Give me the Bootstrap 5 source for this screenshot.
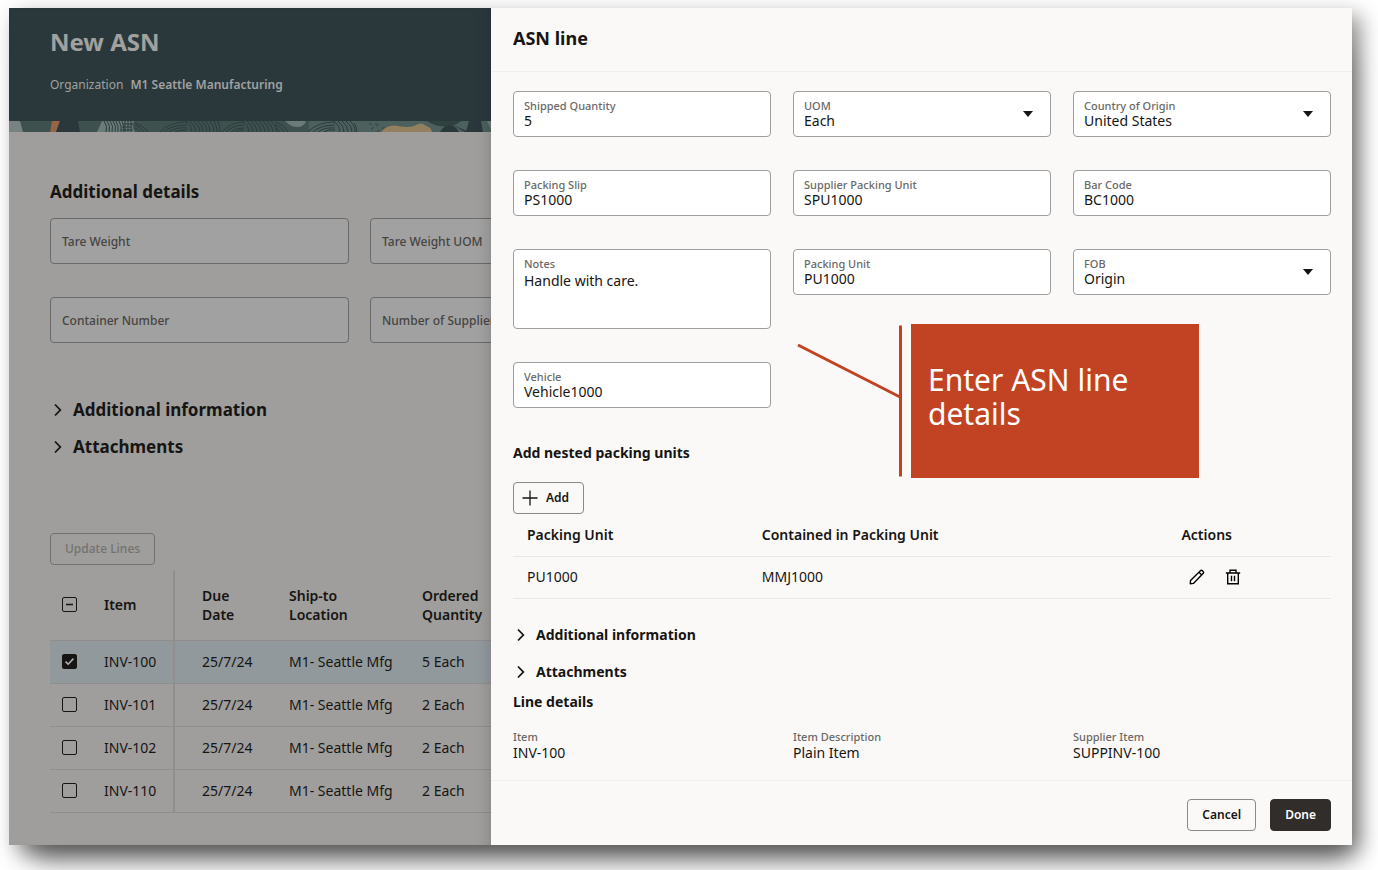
<!DOCTYPE html>
<html lang="en">
<head>
<meta charset="utf-8">
<meta name="viewport" content="width=device-width, initial-scale=1">
<title>New ASN</title>
<link rel="stylesheet" href="https://cdn.jsdelivr.net/npm/bootstrap@5.3.0/dist/css/bootstrap.min.css">
<style>
  body { font-family: "Noto Sans", "Open Sans", sans-serif; font-size: 14px; line-height: 20px; color: #161513; background: #fff; }
  .stage { padding: 8px 26px 25px 9px; }
  .frame { display: grid; grid-template-columns: 482fr 861fr; min-height: calc(100vh - 33px);
    box-shadow: 8px 8px 20px rgba(0,0,0,.46), 10px 30px 24px -14px rgba(0,0,0,.42); }
  h1, h2, h3, dl, dd { margin: 0; }

  /* dimmed page behind the drawer */
  .backpage { background: #9f9e9c; overflow: hidden; min-width: 0; }
  .backpage::after { content: ""; position: absolute; inset: 0; pointer-events: none; box-shadow: inset -12px 0 16px -12px rgba(0,0,0,.2); }
  .page-head { background: #2a383c; color: #a1a1a0; padding: 18px 41px 28px; }
  .page-head h1 { font-size: 24px; line-height: 32px; font-weight: 700; }
  .page-head p { font-size: 12px; line-height: 16px; margin: 19px 0 0; }
  .art { height: 11px; width: 482px; }
  .page-body { padding: 48px 0 32px 41px; }
  .page-body h2, .page-body .disclose { font-size: 17px; line-height: 24px; font-weight: 700; }
  .back-grid { display: grid; grid-template-columns: 299px 299px; gap: 33px 21px; margin: 14px 0 55px; }
  .back-field { height: 46px; border: 1px solid #6c6a68; border-radius: 4px; background: #a1a1a1; padding: 2px 11px 0; }
  .back-field label { font-size: 12px; line-height: 16px; font-weight: 500; color: #464442; white-space: nowrap; }
  .back-field input { flex: 1; min-width: 0; border: 0; background: transparent; outline: 0; }
  .disclose { border: 0; background: none; padding: 0; color: #161513; font-weight: 700; text-align: left; }
  .disclose svg { margin-left: 3px; }
  .back-more { gap: 13px; margin-bottom: 74px; }

  .btn-plain { height: 32px; font-size: 12px; line-height: 16px; font-weight: 600; border: 1px solid #8b8987; border-radius: 4px; padding: 0 14px; color: #161513; background: transparent; }
  .btn-plain:disabled { color: #74726f; border-color: #73716f; font-weight: 500; opacity: 1; }
  .btn-dark-solid { background: #312d2a; border-color: #312d2a; color: #fff; }

  .lines { width: 600px; table-layout: fixed; border-collapse: collapse; margin-top: 5px; }
  .lines th { height: 70px; font-weight: 600; line-height: 19px; vertical-align: middle; padding: 0; }
  .lines td { height: 43px; padding: 0; vertical-align: middle; }
  .lines tbody tr { border-top: 1px solid #8f8e8c; border-bottom: 1px solid #8f8e8c; }
  .lines .edge { border-right: 2px solid #918f8d; }
  .lines .gap-l { padding-left: 27px; }
  .lines .picked { background: #92999c; }
  .lines .w-check { width: 54px; }
  .lines .w-item { width: 70px; }
  .lines .w-date { width: 115px; }
  .lines .w-ship { width: 133px; }
  .lines .form-check-input { display: block; width: 15px; height: 15px; margin: 0 0 0 12px; border: 1px solid #161513; border-radius: 2px; background-color: transparent; background-size: 15px; }
  .lines .form-check-input:checked { background-color: #161513; background-image: url("data:image/svg+xml,%3csvg xmlns='http://www.w3.org/2000/svg' viewBox='0 0 15 15'%3e%3cpath fill='none' stroke='%23a9afb1' stroke-width='1.6' d='M3.5 7.6 6.2 10.2 11.4 4.6'/%3e%3c/svg%3e"); }
  .lines .form-check-input:indeterminate { background-color: transparent; border-color: #161513; background-image: url("data:image/svg+xml,%3csvg xmlns='http://www.w3.org/2000/svg' viewBox='0 0 15 15'%3e%3cpath stroke='%23161513' stroke-width='1.6' d='M4 7.5h7'/%3e%3c/svg%3e"); }

  /* drawer */
  .drawer { background: #fbf9f8; min-width: 0; }
  .drawer-head { padding: 18px 22px 21px; border-bottom: 1px solid #f1efed; }
  .drawer-head h2 { font-size: 18px; line-height: 24px; font-weight: 700; }
  .drawer-body { padding: 19px 21px 16px 22px; }
  .drawer-body h3 { font-size: 14px; line-height: 20px; font-weight: 700; }
  .fields { display: grid; grid-template-columns: repeat(3, 1fr); gap: 33px 22px; }
  .field { display: flex; flex-direction: column; height: 46px; border: 1px solid #a09e9c; border-radius: 4px; background: #fff; padding: 7px 10px 0; }
  .field.tall { height: 80px; }
  .field label, .details dt { font-size: 11px; line-height: 14px; font-weight: 500; color: #6b6966; }
  .field label { line-height: 13px; }
  .field input, .field select, .field textarea { appearance: none; border: 0; outline: 0; padding: 0; margin: 0; width: 100%; background: transparent; color: #161513; font-size: 14px; line-height: 18px; height: 18px; }
  .field textarea { height: 48px; line-height: 22px; resize: none; }
  .field.pick { background: #fff url("data:image/svg+xml,%3csvg xmlns='http://www.w3.org/2000/svg' viewBox='0 0 10 6'%3e%3cpath fill='%23161513' d='M0 0h10L5 6z'/%3e%3c/svg%3e") right 17px center / 10px 6px no-repeat; }
  .nested-title { margin-top: 35px; }
  .add-btn { margin-top: 19px; padding: 0 14px 0 8px; gap: 8px; }
  .units { width: 100%; table-layout: fixed; border-collapse: collapse; }
  .units th { font-weight: 600; }
  .units th, .units td { height: 42px; padding: 0 14px; border-bottom: 1px solid #ebe9e7; vertical-align: middle; }
  .units .c1 { width: 28.7%; }
  .units .c3 { width: 20%; }
  .units .acts { padding-left: 12px; padding-right: 0; }
  .icon-btn { width: 36px; height: 32px; border: 0; background: none; padding: 0; }
  .icon-btn svg { display: block; margin: auto; }
  .drawer .disclose { font-size: 14px; line-height: 20px; }
  .more { margin-top: 26px; margin-bottom: 10px; gap: 17px; }
  .details { margin-top: 18px; display: grid; grid-template-columns: repeat(3, 1fr); gap: 22px; }
  .details dd { line-height: 18px; }
  .drawer-foot { border-top: 1px solid #f1efed; padding: 18px 21px 14px; gap: 14px; }

  /* call-out lying over the drawer */
  .callout-wrap { position: absolute; left: 306px; top: 316px; }
  .callout-box { width: 288px; height: 154px; background: #c14323; color: #fff; font-size: 30px; line-height: 34px; padding: 39px 17px; }
</style>
</head>
<body>
<div class="stage">
<div class="frame">
  <main class="backpage position-relative">
    <header class="page-head">
      <h1>New ASN</h1>
      <p><span class="me-1">Organization</span> <span class="fw-semibold">M1 Seattle Manufacturing</span></p>
    </header>
    <svg class="art d-block" viewBox="0 0 482 11" aria-hidden="true">
      <rect width="482" height="11" fill="#3e514f"/>
      <path fill="#778381" d="M0 0h11l3 11H0z"/>
      <path fill="#966546" d="M43 0h8l-4 11h-6z"/>
      <path fill="#2b383b" d="M51 0h18l2 11H47z"/>
      <path fill="#6a7b78" d="M93 0h32q-3 5 1 11H88z"/>
      <path fill="#4c605e" d="M300 0h182v11H300z"/>
      <g fill="none" stroke="#2b3b3c" stroke-width="1">
        <path d="M95 0q4 5 2 11M98 0q4 5 2 11M101 0q4 5 2 11M104 0q4 5 2 11M107 0q3 5 2 11M110 0q3 5 2 11M113 0q2 5 2 11M116 0v11M119 0v11M122 0v11M114 3h10M113 6h10M112 9h12"/>
        <path d="M126 2q9 3 13 9M126 4q6 2 9 7M126 7q3 1 5 4"/>
        <path d="M151 11Q160 1 178 1M155 11q7-7 23-7M160 11q6-5 18-4M166 11q4-2 12-2M177 0q6 5 6 11M181 0q6 5 6 11M185 0q6 5 6 11M189 0q5 5 5 11M193 0q5 5 5 11M197 0q4 5 4 11M201 0q4 5 4 11M205 0q3 5 3 11M209 0q2 5 2 11"/>
        <path d="M213 11q9-10 22-10M217 11q7-7 18-7M222 11q5-4 13-4M227 11q3-2 8-2M234 0q6 5 6 11M238 0q6 5 6 11M242 0q6 5 6 11M246 0q6 5 6 11M250 0q6 5 6 11M254 0q6 5 6 11M258 0q6 5 6 11M262 0q6 5 6 11M266 1q10 3 13 10M266 4q7 2 9 7M266 7q4 1 5 4"/>
        <path d="M299 11q9-10 27-10M304 11q7-7 22-7M309 11q6-5 17-4M315 11q4-3 11-2M325 0q6 5 6 11M329 0q6 5 6 11M333 0q6 5 6 11M337 0q6 5 6 11M341 0q5 4 5 11M345 2q3 4 3 9"/>
      </g>
      <path fill="#6a7b78" d="M276 0h21q-2 6-9 6-6 0-12-6z"/>
      <path stroke="#31423f" stroke-dasharray="3 3" d="M362 8l10-6M368 11l8-5M360 3h8"/>
      <path fill="#94805f" d="M372 11q7-8 17-6 9 2 16 0 8-5 12 0 5 1 6 6z"/>
      <path fill="#2f4240" d="M418 0h34q-6 5-12 5-12 2-22-5z"/>
      <path fill="#2b383b" d="M431 11q4-7 10-7 6 1 9 7z"/>
      <path fill="#2b383b" d="M460 0h12l2 11h-17z"/>
      <path fill="#2b383b" d="M444 4l12 7h4z"/>
      <path fill="#6a7b78" d="M478 0h4v9z"/>
    </svg>
    <div class="page-body">
      <h2>Additional details</h2>
      <div class="back-grid">
        <div class="back-field d-flex align-items-center"><label for="tw">Tare Weight</label><input id="tw" type="text"></div>
        <div class="back-field d-flex align-items-center"><label for="twu">Tare Weight UOM</label><input id="twu" type="text"></div>
        <div class="back-field d-flex align-items-center"><label for="cn">Container Number</label><input id="cn" type="text"></div>
        <div class="back-field d-flex align-items-center"><label for="ns">Number of Supplier</label><input id="ns" type="text"></div>
      </div>
      <div class="back-more d-flex flex-column">
        <button type="button" class="disclose d-flex align-items-center"><svg class="me-2" width="12" height="14" fill="none" stroke="currentColor" stroke-width="1.8"><path d="M2 1.5 7.3 7 2 12.5"/></svg>Additional information</button>
        <button type="button" class="disclose d-flex align-items-center"><svg class="me-2" width="12" height="14" fill="none" stroke="currentColor" stroke-width="1.8"><path d="M2 1.5 7.3 7 2 12.5"/></svg>Attachments</button>
      </div>
      <button type="button" class="btn-plain" disabled>Update Lines</button>
      <table class="lines">
        <colgroup><col class="w-check"><col class="w-item"><col class="w-date"><col class="w-ship"><col></colgroup>
        <thead>
          <tr><th><input class="form-check-input" type="checkbox" id="all" aria-label="Select all lines"></th><th class="edge">Item</th><th class="gap-l">Due<br>Date</th><th>Ship-to<br>Location</th><th>Ordered<br>Quantity</th></tr>
        </thead>
        <tbody>
          <tr class="picked"><td><input class="form-check-input" type="checkbox" checked aria-label="INV-100"></td><td class="edge">INV-100</td><td class="gap-l">25/7/24</td><td>M1- Seattle Mfg</td><td>5 Each</td></tr>
          <tr><td><input class="form-check-input" type="checkbox" aria-label="INV-101"></td><td class="edge">INV-101</td><td class="gap-l">25/7/24</td><td>M1- Seattle Mfg</td><td>2 Each</td></tr>
          <tr><td><input class="form-check-input" type="checkbox" aria-label="INV-102"></td><td class="edge">INV-102</td><td class="gap-l">25/7/24</td><td>M1- Seattle Mfg</td><td>2 Each</td></tr>
          <tr><td><input class="form-check-input" type="checkbox" aria-label="INV-110"></td><td class="edge">INV-110</td><td class="gap-l">25/7/24</td><td>M1- Seattle Mfg</td><td>2 Each</td></tr>
        </tbody>
      </table>
    </div>
  </main>

  <aside class="drawer position-relative d-flex flex-column">
    <div class="drawer-head"><h2>ASN line</h2></div>
    <div class="drawer-body flex-grow-1">
      <div class="fields">
        <div class="field"><label for="qty">Shipped Quantity</label><input id="qty" type="text" value="5"></div>
        <div class="field pick"><label for="uom">UOM</label><select id="uom"><option>Each</option></select></div>
        <div class="field pick"><label for="coo">Country of Origin</label><select id="coo"><option>United States</option></select></div>
        <div class="field"><label for="slip">Packing Slip</label><input id="slip" type="text" value="PS1000"></div>
        <div class="field"><label for="spu">Supplier Packing Unit</label><input id="spu" type="text" value="SPU1000"></div>
        <div class="field"><label for="bar">Bar Code</label><input id="bar" type="text" value="BC1000"></div>
        <div class="field tall"><label for="notes">Notes</label><textarea id="notes">Handle with care.</textarea></div>
        <div class="field"><label for="pu">Packing Unit</label><input id="pu" type="text" value="PU1000"></div>
        <div class="field pick"><label for="fob">FOB</label><select id="fob"><option>Origin</option></select></div>
        <div class="field"><label for="veh">Vehicle</label><input id="veh" type="text" value="Vehicle1000"></div>
      </div>

      <h3 class="nested-title">Add nested packing units</h3>
      <button type="button" class="btn-plain add-btn d-flex align-items-center"><svg width="16" height="16" fill="none" stroke="currentColor" stroke-width="1.3"><path d="M8 .5v15M.5 8h15"/></svg>Add</button>
      <table class="units">
        <colgroup><col class="c1"><col><col class="c3"></colgroup>
        <thead><tr><th>Packing Unit</th><th>Contained in Packing Unit</th><th>Actions</th></tr></thead>
        <tbody><tr>
          <td>PU1000</td><td>MMJ1000</td>
          <td class="acts"><div class="d-flex">
            <button type="button" class="icon-btn" aria-label="Edit"><svg width="16" height="16" fill="none" stroke="currentColor" stroke-width="1.4" stroke-linejoin="round"><path d="M1.3 14.7 1.5 11.6 11.7 1.6q.7-.7 1.4 0l1.2 1.2q.7.7 0 1.4L4.4 14.4zM10 3.3 12.7 6"/></svg></button>
            <button type="button" class="icon-btn" aria-label="Delete"><svg width="16" height="16" fill="none" stroke="currentColor" stroke-width="1.4"><path d="M.8 4h14.4M2.7 4v10.8h10.6V4M5 3.8V1.2h6v2.6M6.5 6.8v5.4M9.5 6.8v5.4"/></svg></button>
          </div></td>
        </tr></tbody>
      </table>

      <div class="more d-flex flex-column">
        <button type="button" class="disclose d-flex align-items-center"><svg class="me-2" width="12" height="14" fill="none" stroke="currentColor" stroke-width="1.8"><path d="M2 1.5 7.3 7 2 12.5"/></svg>Additional information</button>
        <button type="button" class="disclose d-flex align-items-center"><svg class="me-2" width="12" height="14" fill="none" stroke="currentColor" stroke-width="1.8"><path d="M2 1.5 7.3 7 2 12.5"/></svg>Attachments</button>
      </div>
      <h3>Line details</h3>
      <dl class="details">
        <div><dt>Item</dt><dd>INV-100</dd></div>
        <div><dt>Item Description</dt><dd>Plain Item</dd></div>
        <div><dt>Supplier Item</dt><dd>SUPPINV-100</dd></div>
      </dl>
    </div>
    <div class="drawer-foot d-flex justify-content-end">
      <button type="button" class="btn-plain">Cancel</button>
      <button type="button" class="btn-plain btn-dark-solid">Done</button>
    </div>

    <div class="callout-wrap d-flex">
      <svg width="114" height="154" fill="none" stroke="#c14323" stroke-width="3"><path d="M1 21 103 73M103.500 1.500V152.500"/></svg>
      <div class="callout-box">Enter ASN line details</div>
    </div>
  </aside>
</div>
</div>
<script src="https://cdn.jsdelivr.net/npm/bootstrap@5.3.0/dist/js/bootstrap.bundle.min.js"></script>
<script>document.getElementById('all').indeterminate = true;</script>
</body>
</html>
